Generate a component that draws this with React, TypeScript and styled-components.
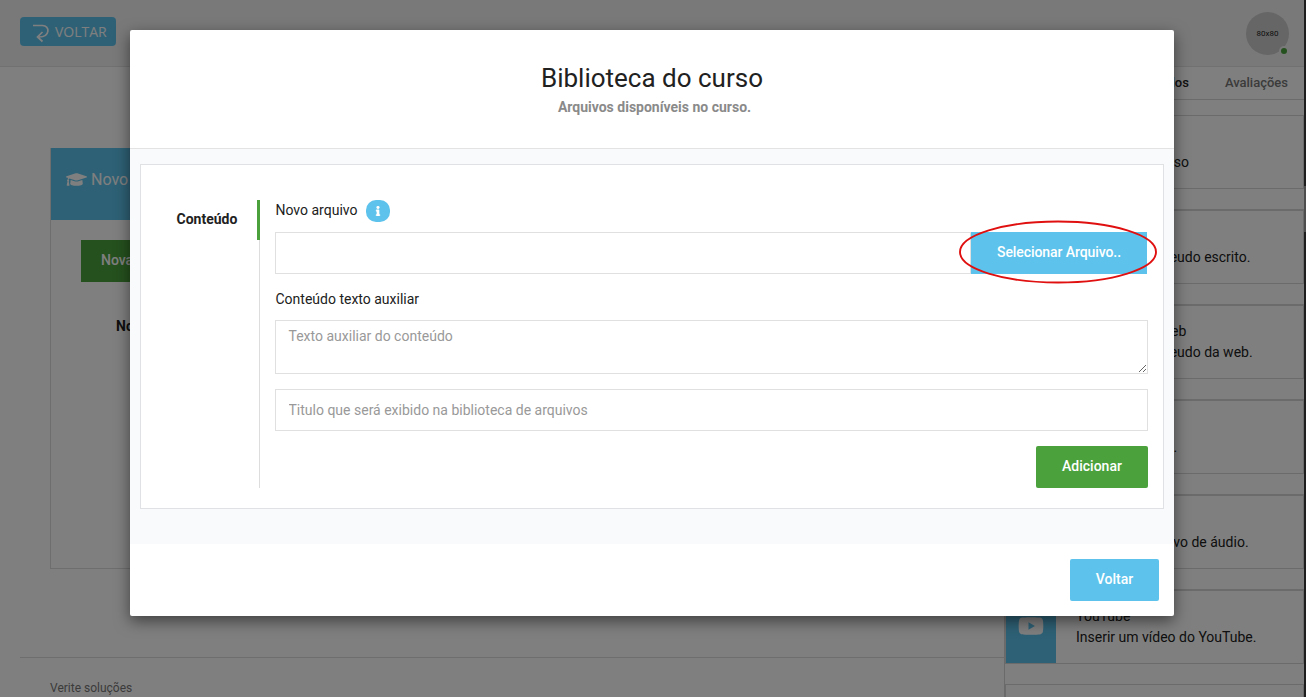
import React from "react";
import styled, { createGlobalStyle } from "styled-components";
import { FaGraduationCap, FaInfo, FaYoutube } from "react-icons/fa";

const Global = createGlobalStyle`
  *, *::before, *::after { box-sizing: border-box; }
  body { margin: 0; background: #fff; overflow: hidden; }
  body, input, textarea, button { font-family: Roboto, "Liberation Sans", sans-serif; font-size: 14px; color: #212121; }
`;

const Screen = styled.div`
  position: relative;
  width: 1306px;
  height: 697px;
  overflow: hidden;
  display: flex;
`;

const Page = styled.div`
  width: 1304px;
  height: 697px;
  display: flex;
  flex-direction: column;
  background: #fff;
`;

const Track = styled.div`
  width: 2px;
  height: 697px;
  background: #3c3c3c;
  padding-top: 186px;
`;

const Thumb = styled.div`
  height: 46px;
  background: #9c9c9c;
`;

const Header = styled.header`
  flex: none;
  height: 67px;
  background: #f2f2f2;
  border-bottom: 1px solid #e2e2e2;
  display: flex;
  justify-content: space-between;
  padding: 12px 15px 0 20px;
`;

const BackButton = styled.button`
  margin-top: 5px;
  width: 96px;
  height: 29px;
  padding: 0 0 0 12px;
  border: 0;
  border-radius: 4px;
  background: #5dc3ec;
  color: #fff;
  display: flex;
  align-items: center;
  gap: 5px;
  font-family: "Open Sans", sans-serif;
  font-size: 14px;
  line-height: 29px;

  svg {
    margin-top: 2px;
  }
`;

const Avatar = styled.div`
  position: relative;
  width: 43px;
  height: 43px;
  border-radius: 50%;
  background: #ccc;
  color: #222;
  font-size: 8px;
  line-height: 43px;
  text-align: center;
`;

const Status = styled.span`
  position: absolute;
  right: 0;
  bottom: -1px;
  width: 10px;
  height: 10px;
  border-radius: 50%;
  border: 2px solid #f2f2f2;
  background: #4ba23d;
`;

const Columns = styled.div`
  flex: 1;
  min-height: 0;
  display: flex;
`;

const Main = styled.main`
  width: 1004px;
  padding: 81px 0 0 20px;
`;

const CourseCard = styled.section`
  margin-left: 30px;
  width: 900px;
  height: 421px;
  border: 1px solid #dcdcdc;
  border-top: 0;
`;

const CourseHead = styled.div`
  height: 72px;
  padding: 0 15px 10px;
  background: #5dc3ec;
  color: #fff;
  display: flex;
  align-items: center;
  gap: 4px;
  font-size: 16px;
`;

const NewButton = styled.button`
  display: block;
  margin: 20px 0 0 30px;
  height: 42px;
  padding: 0 20px 2px;
  border: 0;
  background: #4ba23d;
  color: #fff;
  font-weight: 500;
`;

const CourseName = styled.div`
  margin: 36px 0 0 65px;
  font-weight: 700;
  line-height: 16px;
`;

const Footer = styled.footer`
  margin-top: 88px;
  border-top: 1px solid #dcdcdc;
  padding: 22px 30px;
  font-size: 12px;
  line-height: 16px;
  color: #777;
`;

const Side = styled.aside`
  width: 300px;
  height: 630px;
  overflow: hidden;
  border-left: 1px solid #d5d5d5;
`;

const Tabs = styled.nav`
  height: 33px;
  border-bottom: 1px solid #d6d6d6;
  display: flex;
  justify-content: flex-end;
  gap: 36px;
  padding: 7px 16px 0 0;
  font-size: 13px;
  line-height: 17px;
  font-weight: 500;
`;

const Tab = styled.span<{ $active?: boolean }>`
  color: ${(p) => (p.$active ? "#222" : "#777")};
`;

const Item = styled.div<{ $first?: boolean }>`
  margin-top: ${(p) => (p.$first ? 15 : 20)}px;
  height: ${(p) => (p.$first ? 74 : 75)}px;
  border: 1px solid #d6d6d6;
  border-top-width: ${(p) => (p.$first ? 1 : 2)}px;
  display: flex;
  line-height: 21px;
`;

const NextItem = styled.div`
  margin-top: 20px;
  height: 75px;
  border: 1px solid #d6d6d6;
`;

const ItemIcon = styled.div`
  width: 50px;
  display: flex;
  align-items: center;
  justify-content: center;
  padding-bottom: 3px;
  background: #5dc3ec;
  color: #fff;
`;

const ItemText = styled.div`
  padding: 15px 20px;
  white-space: nowrap;
`;

const Backdrop = styled.div`
  position: absolute;
  inset: 0;
  background: rgba(0, 0, 0, 0.5);
  padding: 30px 0 0 130px;
`;

const Modal = styled.div`
  width: 1044px;
  height: 586px;
  border-radius: 2px;
  background: #fff;
  box-shadow: 0 5px 15px rgba(0, 0, 0, 0.5);
  display: flex;
  flex-direction: column;
  overflow: hidden;
`;

const ModalHead = styled.div`
  height: 119px;
  border-bottom: 1px solid #e3e3e3;
  padding-top: 33px;
  text-align: center;
`;

const Title = styled.h4`
  margin: 0;
  font-size: 26px;
  line-height: 30px;
  font-weight: 400;
`;

const Subtitle = styled.div`
  margin-top: 6px;
  padding-left: 5px;
  line-height: 16px;
  font-weight: 700;
  color: #8a8a8a;
`;

const ModalBody = styled.div`
  height: 395px;
  background: #f9fafc;
  padding: 15px 10px 0;
`;

const Panel = styled.div`
  height: 345px;
  border: 1px solid #dfe1e4;
  background: #fff;
  padding: 35px 15px 20px;
  display: flex;
`;

const PanelNav = styled.div`
  width: 104px;
  border-right: 1px solid #ddd;
`;

const PanelTab = styled.div`
  height: 40px;
  border-right: 3px solid #4ba23d;
  margin-right: -1px;
  padding-left: 20.5px;
  line-height: 38px;
  font-weight: 700;
`;

const Form = styled.div`
  flex: 1;
  padding-left: 15px;
  display: flex;
  flex-direction: column;
`;

const Label = styled.label`
  height: 22px;
  display: flex;
  gap: 9px;
  padding-left: 0.5px;
  line-height: 20px;
`;

const InfoBadge = styled.span`
  width: 24px;
  height: 22px;
  border-radius: 10px;
  background: #5dc3ec;
  color: #fff;
  display: flex;
  align-items: center;
  justify-content: center;
  padding-bottom: 1px;

  path {
    stroke: #fff;
    stroke-width: 22px;
  }
`;

const FileRow = styled.div`
  position: relative;
  margin: 10px 0 15px;
  height: 42px;
  display: flex;
  padding-right: 1px;
`;

const TextInput = styled.input<{ $grow?: boolean }>`
  flex: ${(p) => (p.$grow ? "1" : "none")};
  height: 42px;
  border: 1px solid #e0e0e0;
  border-radius: 0;
  padding: 0 12.5px;
  outline: 0;
  &::placeholder { color: #999; opacity: 1; }
`;

const TextBox = styled.textarea`
  display: block;
  width: 873px;
  height: 54px;
  margin: 9px 0 15px;
  border: 1px solid #e0e0e0;
  padding: 5px 12.5px;
  line-height: 20px;
  overflow: hidden;
  outline: 0;
  resize: vertical;
  &::placeholder { color: #999; opacity: 1; }
`;

const Button = styled.button<{ $w: number; $green?: boolean; $square?: boolean }>`
  width: ${(p) => p.$w}px;
  height: 42px;
  padding: 0 0 2px;
  border: 0;
  border-radius: ${(p) => (p.$square ? 0 : 2)}px;
  background: ${(p) => (p.$green ? "#4ba23d" : "#5dc3ec")};
  color: #fff;
  font-weight: 500;
  letter-spacing: ${(p) => (p.$square ? "-0.08px" : "normal")};
`;

const Highlight = styled.svg`
  position: absolute;
  right: -9px;
  top: -12px;
  overflow: visible;
`;

const Actions = styled.div<{ $right: number }>`
  display: flex;
  justify-content: flex-end;
  padding: 15px ${(p) => p.$right}px 0 0;
`;

const items = [
  ["Curso", "Inserir um recurso"],
  ["Texto", "Inserir um conteudo escrito."],
  ["Conteudo da Web", "Inserir um conteudo da web."],
  ["Arquivo", "Inserir um texto."],
  ["Áudio", "Inserir um arquivo de áudio."],
  ["YouTube", "Inserir um vídeo do YouTube."],
];

export default function App() {
  return (
    <Screen>
      <Global />
      <Page>
        <Header>
          <BackButton>
            <svg width="18" height="20" viewBox="0 0 18 20" fill="none" stroke="#fff" strokeWidth="1.7">
              <path d="M1 2.5H10.5C18 2.5 18.5 14 7 14M10.5 9L5.5 14L10.5 18.5" />
            </svg>
            VOLTAR
          </BackButton>
          <Avatar>
            80x80
            <Status />
          </Avatar>
        </Header>
        <Columns>
          <Main>
            <CourseCard>
              <CourseHead>
                <FaGraduationCap size={21} />
                Novo curso
              </CourseHead>
              <NewButton>Nova aula</NewButton>
              <CourseName>Nome</CourseName>
            </CourseCard>
            <Footer>Verite soluções</Footer>
          </Main>
          <Side>
            <Tabs>
              <Tab $active>Conteúdos</Tab>
              <Tab>Avaliações</Tab>
            </Tabs>
            {items.map(([name, text], i) => (
              <Item key={name} $first={i === 0}>
                <ItemIcon>
                  <FaYoutube size={26} />
                </ItemIcon>
                <ItemText>
                  {name}
                  <br />
                  {text}
                </ItemText>
              </Item>
            ))}
            <NextItem />
          </Side>
        </Columns>
      </Page>
      <Track>
        <Thumb />
      </Track>
      <Backdrop>
        <Modal>
          <ModalHead>
            <Title>Biblioteca do curso</Title>
            <Subtitle>Arquivos disponíveis no curso.</Subtitle>
          </ModalHead>
          <ModalBody>
            <Panel>
              <PanelNav>
                <PanelTab>Conteúdo</PanelTab>
              </PanelNav>
              <Form>
                <Label>
                  Novo arquivo
                  <InfoBadge>
                    <FaInfo size={10} />
                  </InfoBadge>
                </Label>
                <FileRow>
                  <TextInput $grow />
                  <Button $w={176} $square>
                    Selecionar Arquivo..
                  </Button>
                  <Highlight width="198" height="64">
                    <ellipse cx="99" cy="32" rx="98" ry="30.5" fill="none" stroke="#e01010" strokeWidth="1.9" />
                  </Highlight>
                </FileRow>
                <Label>Conteúdo texto auxiliar</Label>
                <TextBox placeholder="Texto auxiliar do conteúdo" />
                <TextInput placeholder="Titulo que será exibido na biblioteca de arquivos" />
                <Actions $right={0}>
                  <Button $w={112} $green>
                    Adicionar
                  </Button>
                </Actions>
              </Form>
            </Panel>
          </ModalBody>
          <Actions $right={15}>
            <Button $w={89}>Voltar</Button>
          </Actions>
        </Modal>
      </Backdrop>
    </Screen>
  );
}
